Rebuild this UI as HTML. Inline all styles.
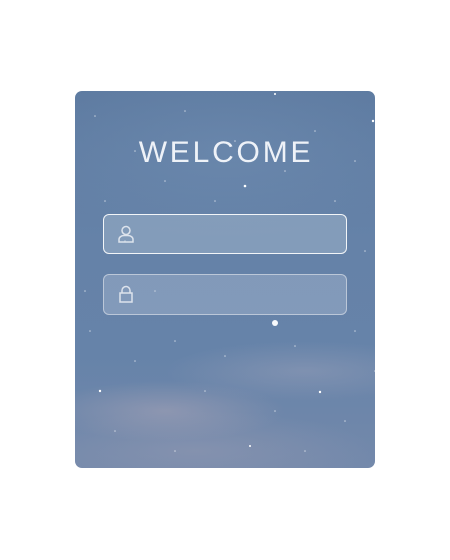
<!DOCTYPE html>
<html><head><style>
body{margin:0;width:450px;height:560px;background:#fff;position:relative;overflow:hidden;font-family:"Liberation Sans",sans-serif}
.card{position:absolute;left:75px;top:91px;width:300px;height:377px;border-radius:7px;overflow:hidden;
background:
radial-gradient(ellipse 120px 30px at 90px 320px,rgba(180,170,185,.45),transparent),
radial-gradient(ellipse 140px 30px at 230px 280px,rgba(170,170,190,.35),transparent),
radial-gradient(ellipse 180px 40px at 120px 360px,rgba(160,160,180,.4),transparent),
radial-gradient(ellipse 200px 90px at 150px 60px,rgba(120,150,185,.35),transparent),
linear-gradient(180deg,#5e7ba1 0%,#6582a8 40%,#6683a9 70%,#7489ab 100%)}
h1{position:absolute;left:2px;right:0;top:45px;margin:0;text-align:center;color:#eef2f8;font-weight:normal;font-size:30px;letter-spacing:2.8px;font-family:"Liberation Sans",sans-serif}
.in{position:absolute;left:28px;width:242px;height:38px;border-radius:6px;background:rgba(200,210,225,.3)}
.u{top:123px;border:1.5px solid rgba(255,255,255,.9);background:rgba(190,205,220,.35)}
.p{top:183px;border:1px solid rgba(255,255,255,.45);height:39px}
svg.i{position:absolute;left:12px;top:9px}
</style></head><body>
<div class="card">
<svg width="300" height="377" style="position:absolute;left:0;top:0" fill="#fff">
<circle cx="200" cy="232" r="3" opacity=".95"/>
<circle cx="170" cy="95" r="1.3"/><circle cx="200" cy="3" r="1"/><circle cx="298" cy="30" r="1.2"/>
<circle cx="25" cy="300" r="1.2"/><circle cx="245" cy="301" r="1.2"/><circle cx="175" cy="355" r="1"/>
<g opacity=".6">
<circle cx="20" cy="25" r=".8"/><circle cx="60" cy="60" r=".8"/><circle cx="110" cy="20" r=".8"/><circle cx="240" cy="40" r=".8"/><circle cx="280" cy="70" r=".8"/><circle cx="30" cy="110" r=".8"/><circle cx="260" cy="110" r=".8"/><circle cx="140" cy="110" r=".8"/><circle cx="50" cy="150" r=".8"/><circle cx="290" cy="160" r=".8"/><circle cx="10" cy="200" r=".8"/><circle cx="100" cy="250" r=".8"/><circle cx="150" cy="265" r=".8"/><circle cx="220" cy="255" r=".8"/><circle cx="280" cy="240" r=".8"/><circle cx="60" cy="270" r=".8"/><circle cx="130" cy="300" r=".8"/><circle cx="200" cy="320" r=".8"/><circle cx="270" cy="330" r=".8"/><circle cx="40" cy="340" r=".8"/><circle cx="100" cy="360" r=".8"/><circle cx="230" cy="360" r=".8"/><circle cx="80" cy="200" r=".8"/><circle cx="300" cy="280" r=".8"/><circle cx="15" cy="240" r=".8"/><circle cx="160" cy="50" r=".8"/><circle cx="90" cy="90" r=".8"/><circle cx="210" cy="80" r=".8"/>
</g>
</svg>
<h1>WELCOME</h1>
<div class="in u"><svg class="i" width="20" height="20" viewBox="0 0 20 20" fill="none" stroke="#dde3ec" stroke-width="1.5"><circle cx="10" cy="6.5" r="4"/><path d="M3 18v-2.5c0-2 2-4 5-4h4c3 0 5 2 5 4V18z"/></svg></div>
<div class="in p"><svg class="i" width="20" height="20" viewBox="0 0 20 20" fill="none" stroke="#dde3ec" stroke-width="1.5"><path d="M6 9V6.5a4 4 0 0 1 8 0V9"/><rect x="4" y="9" width="12" height="9"/></svg></div>
</div>
</body></html>
